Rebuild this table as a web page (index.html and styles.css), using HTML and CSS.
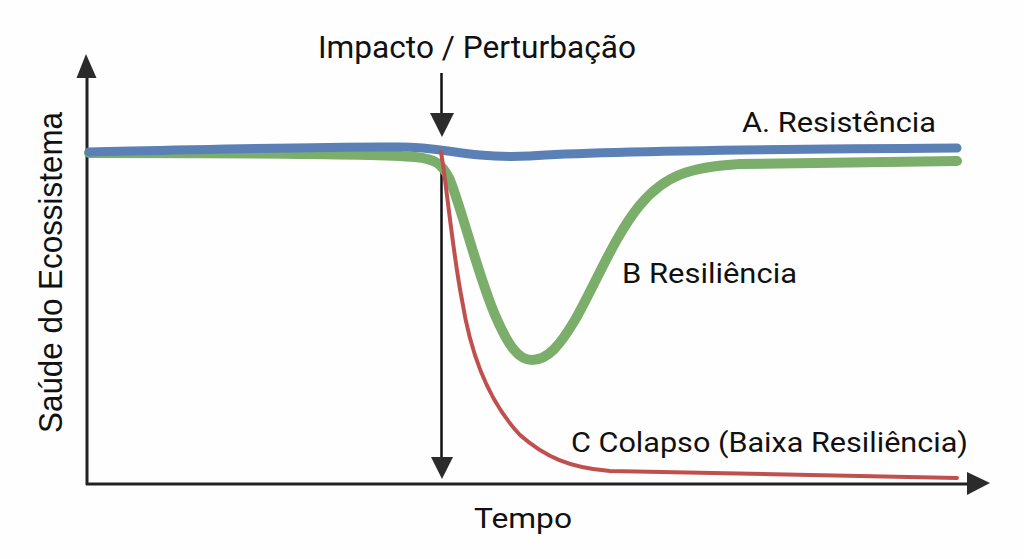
FILE: index.html
```html
<!DOCTYPE html>
<html lang="pt">
<head>
<meta charset="utf-8">
<title>Resistência e Resiliência</title>
<link rel="stylesheet" href="styles.css">
</head>
<body>
<div class="chart">
<svg class="plot" width="1024" height="559" viewBox="0 0 1024 559" xmlns="http://www.w3.org/2000/svg">
  <!-- axes -->
  <line class="axis" x1="87" y1="75" x2="87" y2="485"/>
  <line class="axis" x1="86" y1="484" x2="970" y2="484"/>
  <polygon class="head" points="86,54 76.5,78 96.5,78"/>
  <polygon class="head" points="990,483 967,472 967,495"/>

  <!-- impact line -->
  <line class="impact" x1="441.5" y1="73" x2="441.5" y2="117"/>
  <polygon class="head" points="430,113 454,113 442,137"/>
  <line class="impact" x1="441.5" y1="150" x2="441.5" y2="460"/>
  <polygon class="head" points="431,457 453,457 442,479"/>

  <!-- curves -->
  <path class="green" d="M89,153 C250,153 380,154 415,157 C435,159 442,163 450,180 C462,210 478,275 495,315 C508,345 518,360 532,360 C548,360 560,345 575,320 C595,285 615,235 640,205 C665,175 690,167 740,164 L957,161"/>
  <path class="blue" d="M89,152 C200,150 330,146 400,147 C430,147 450,152 480,155 C500,157 510,157 530,156 C600,151 800,149 957,148"/>
  <path class="red" d="M441,152 C446,180 453,255 462,300 C470,350 487,400 520,435 C545,457 570,468 610,471 L957,478"/>

  <!-- labels -->
  <text class="label big" x="318" y="58" textLength="318" lengthAdjust="spacingAndGlyphs">Impacto / Perturbação</text>
  <text class="label" x="742" y="132" textLength="194" lengthAdjust="spacingAndGlyphs">A. Resistência</text>
  <text class="label" x="622" y="283" textLength="175" lengthAdjust="spacingAndGlyphs">B Resiliência</text>
  <text class="label" x="571" y="452" textLength="397" lengthAdjust="spacingAndGlyphs">C Colapso (Baixa Resiliência)</text>
  <text class="label" x="474" y="528" textLength="98" lengthAdjust="spacingAndGlyphs">Tempo</text>
  <text class="label ylabel" x="-433" y="62" transform="rotate(-90)" textLength="321" lengthAdjust="spacingAndGlyphs">Saúde do Ecossistema</text>
</svg>
</div>
</body>
</html>
```

FILE: styles.css
```css
html, body {
  margin: 0;
  padding: 0;
  background: #ffffff;
}

.chart {
  width: 1024px;
  height: 559px;
  overflow: hidden;
  background: #fefefe;
}

.plot {
  display: block;
}

.axis {
  stroke: #222222;
  stroke-width: 3;
}

.impact {
  stroke: #111111;
  stroke-width: 2.5;
}

.head {
  fill: #2b2b2b;
}

.green,
.blue,
.red {
  fill: none;
  stroke-linecap: round;
  stroke-linejoin: round;
}

.green {
  stroke: #7aae6a;
  stroke-width: 10;
}

.blue {
  stroke: #5b80b5;
  stroke-width: 9;
}

.red {
  stroke: #c0504d;
  stroke-width: 4;
}

.label {
  font-family: Roboto, "Liberation Sans", Arial, sans-serif;
  font-size: 28px;
  fill: #111111;
}

.label.big {
  font-size: 31px;
}

.label.ylabel {
  font-family: "Liberation Sans", Arial, sans-serif;
  font-size: 34px;
}
```
